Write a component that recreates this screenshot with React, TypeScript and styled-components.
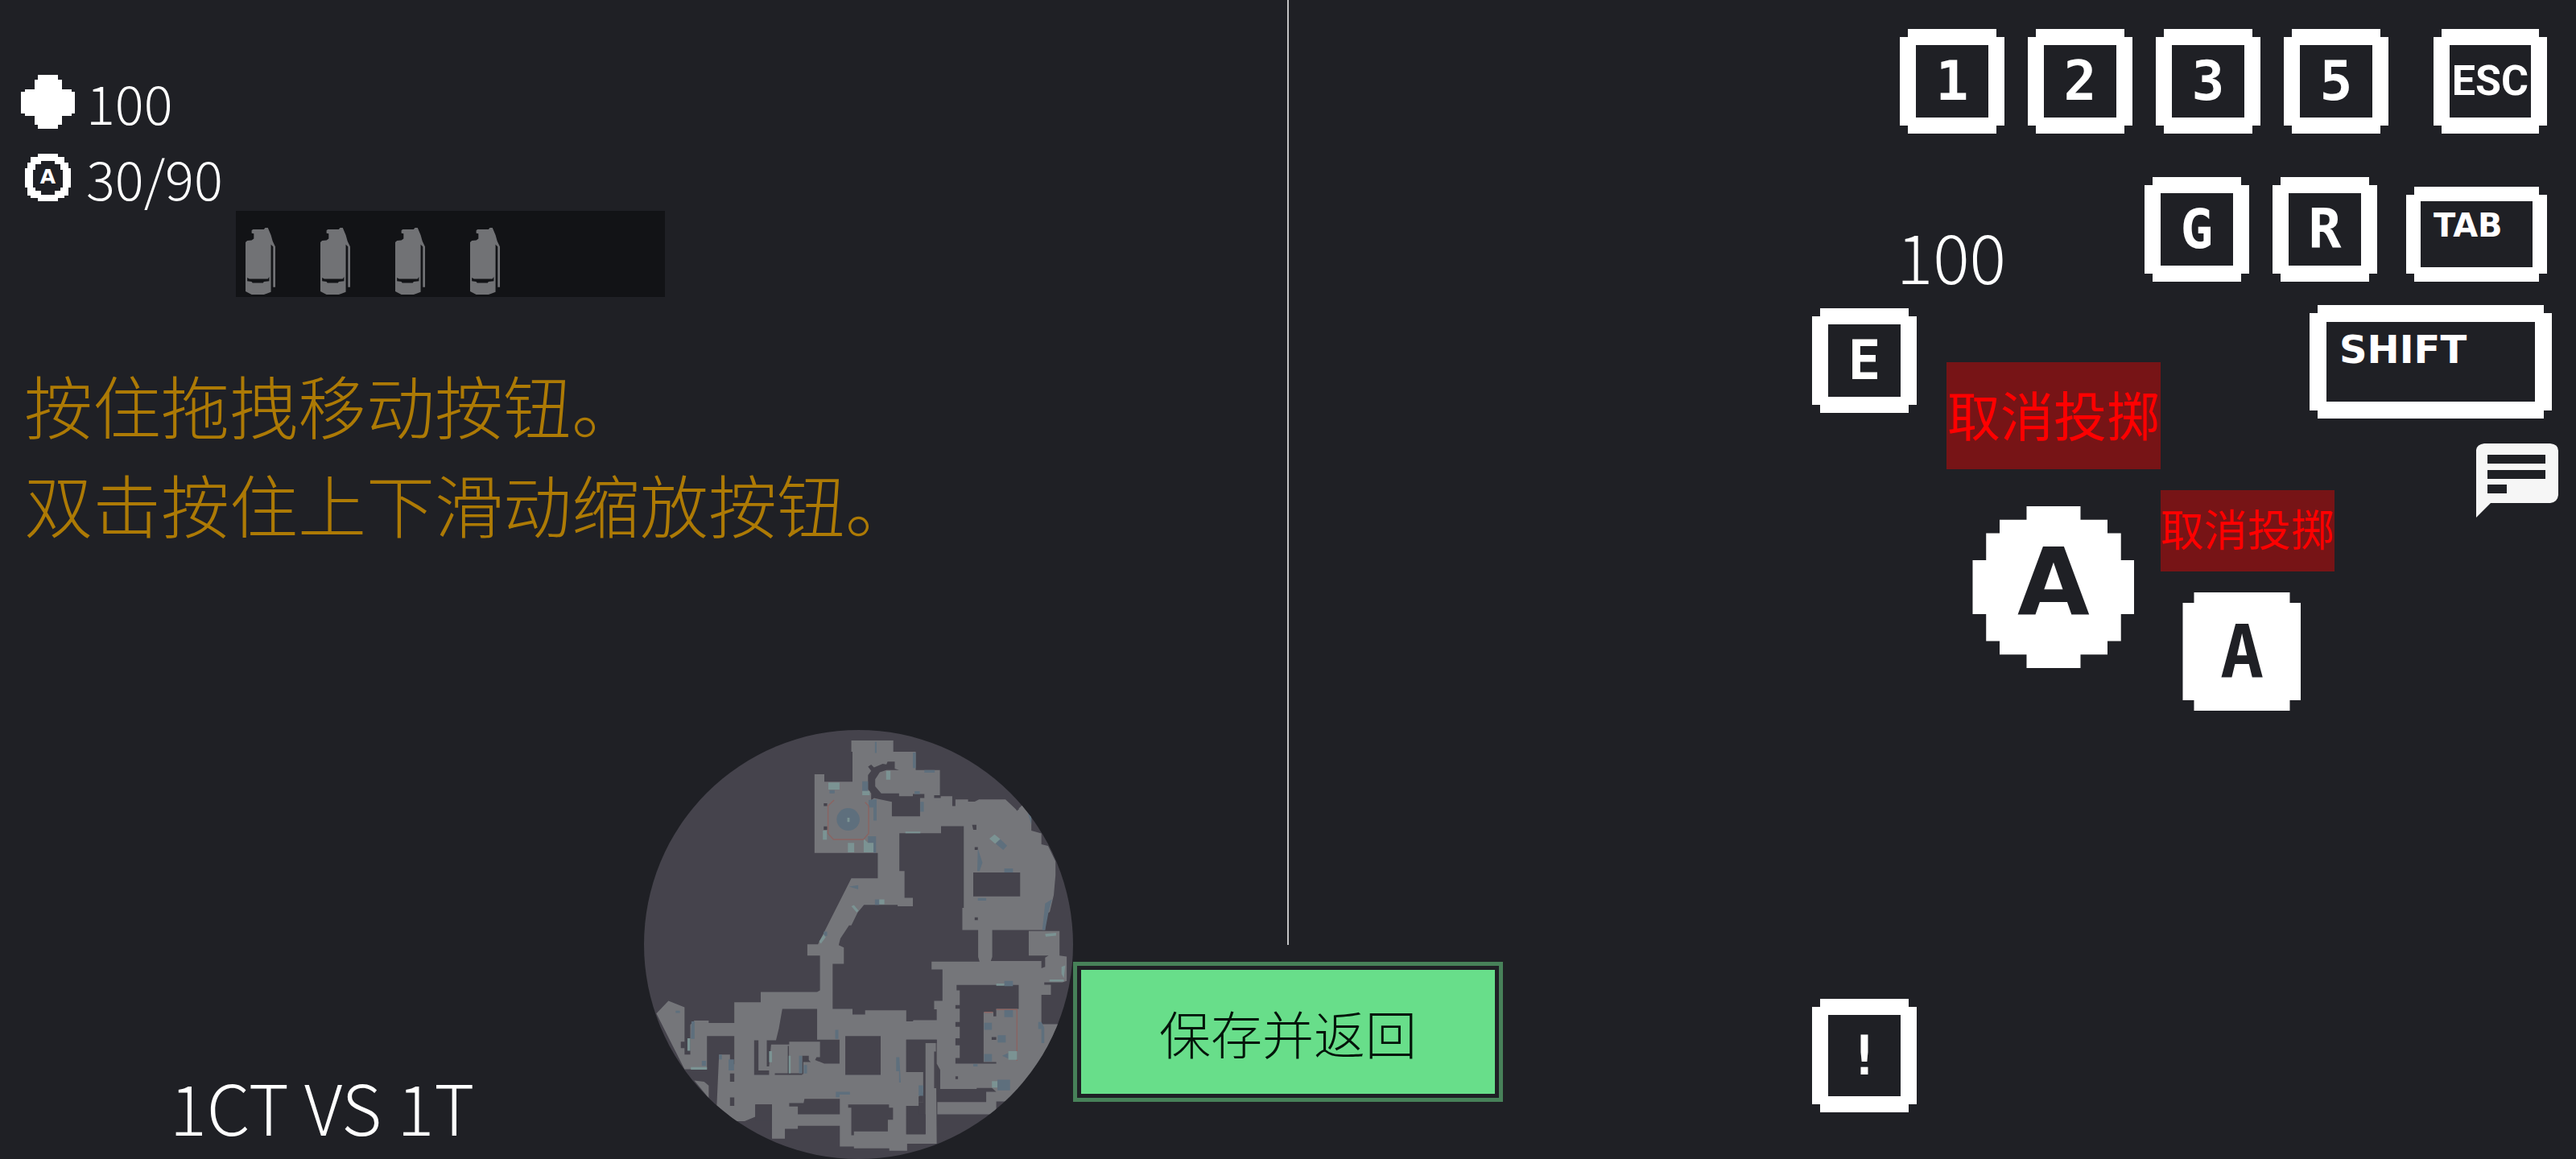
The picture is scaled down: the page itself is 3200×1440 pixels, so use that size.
import React from "react";
import styled, { createGlobalStyle } from "styled-components";

const ink = "#1f2025";
const white = "#ffffff";
const cjk = '"Noto Sans CJK SC", "Noto Sans", sans-serif';
const blocky = '"DejaVu Sans", "Liberation Sans", sans-serif';
const blockyMono = '"DejaVu Sans Mono", "Liberation Mono", monospace';
const narrow = 'Roboto, "Liberation Sans", sans-serif';

const GlobalStyle = createGlobalStyle`
  *, *::before, *::after { box-sizing: border-box; }
  body { margin: 0; background: ${ink}; color: ${white}; font-family: ${cjk}; font-weight: 300; }
  button { margin: 0; padding: 0; border: 0; background: none; color: inherit; font: inherit; cursor: pointer; }
  svg { display: block; }
`;

const Page = styled.main`
  display: grid;
  grid-template-columns: repeat(12, minmax(0, 1fr));
  grid-template-rows: 1fr auto;
  min-height: 100vh;
  overflow: hidden;
`;

/* ---------- left side ---------- */

const Status = styled.section`
  grid-column: 1 / 6;
  grid-row: 1;
  padding-top: 84px;
`;

const Stats = styled.div`
  display: grid;
  gap: 10px;
  padding-left: 26px;
`;

const Stat = styled.div`
  display: flex;
  align-items: center;
  gap: 14px;
  height: 84px;
  font-size: 67px;
  line-height: 84px;
`;

const StatIcon = styled.span`
  display: grid;
  place-items: center;
  width: 67px;
`;

const ArmorLetter = styled.span`
  grid-area: 1 / 1;
  font: 700 25px/28px ${blocky};
`;

const ArmorRing = styled.svg`
  grid-area: 1 / 1;
`;

const Slots = styled.div`
  display: flex;
  align-items: flex-end;
  gap: 56px;
  width: 40%;
  height: 107px;
  margin-left: 293px;
  padding: 0 12px 3px;
  background: #121316;
`;

const Tip = styled.p`
  margin: 71px 0 0;
  padding-left: 30px;
  color: #ad7a05;
  font-size: 85px;
  line-height: 123px;
  white-space: nowrap;
`;

const Score = styled.div`
  grid-column: 1 / 4;
  grid-row: 2;
  align-self: end;
  padding-bottom: 5px;
  font-size: 86px;
  line-height: 123px;
  text-align: center;
`;

const MiniMap = styled.div`
  grid-column: 4 / 6;
  grid-row: 2;
  aspect-ratio: 1;
  overflow: hidden;
  border-radius: 50%;
  background: #45434c;

  svg { width: 100%; height: 100%; }
`;

/* ---------- middle ---------- */

const Middle = styled.section`
  grid-column: 6 / 8;
  grid-row: 1 / 3;
  display: flex;
  flex-direction: column;
  align-items: center;
  padding-bottom: 71px;
`;

const Divider = styled.div`
  flex: 1;
  width: 2px;
  margin-bottom: 21px;
  background: #c3c3c5;
`;

const SaveButton = styled.button`
  width: 100%;
  height: 174px;
  padding: 5px;
  border: 5px solid #478159;
  font-size: 64px;
`;

const SaveFace = styled.span`
  display: grid;
  place-items: center;
  height: 100%;
  background: #68de8a;
  color: #04140a;
`;

/* ---------- right side ---------- */

const Controls = styled.section`
  grid-column: 8 / 13;
  grid-row: 1 / 3;
  display: flex;
  flex-direction: column;
  padding: 36px 22px 58px 0;
`;

const KeyRow = styled.div<{ $top: number }>`
  display: flex;
  justify-content: flex-end;
  align-items: flex-end;
  margin-top: ${(p) => p.$top}px;
  padding-right: 14px;
`;

const KeyGroup = styled.div<{ $after: number }>`
  display: flex;
  gap: 29px;
  margin-right: ${(p) => p.$after}px;
`;

const Key = styled.button<{ $w?: number; $h?: number; $edge?: number; $size?: number; $font?: string }>`
  flex: none;
  width: ${(p) => p.$w ?? 130}px;
  height: ${(p) => p.$h ?? 130}px;
  border: ${(p) => p.$edge ?? 20}px solid ${white};
  clip-path: polygon(
    10px 0, calc(100% - 10px) 0, calc(100% - 10px) 10px, 100% 10px,
    100% calc(100% - 10px), calc(100% - 10px) calc(100% - 10px), calc(100% - 10px) 100%, 10px 100%,
    10px calc(100% - 10px), 0 calc(100% - 10px), 0 10px, 10px 10px
  );
  display: flex;
  justify-content: center;
  align-items: center;
  font: 700 ${(p) => p.$size ?? 68}px/1 ${(p) => p.$font ?? blockyMono};
`;

const WideKey = styled(Key)`
  justify-content: flex-start;
  align-items: flex-start;
  padding: 10px 16px;
`;

const Money = styled.div`
  margin-right: auto;
  padding-left: 489px;
  font-size: 85px;
  line-height: 68px;
`;

const Pad = styled.div`
  flex: 1;
  display: grid;
  grid-template-columns: 167px 266px 185px 31px 278px;
  grid-template-rows: auto 1fr;
  justify-content: end;
  align-items: start;
  margin-top: 29px;
`;

const Cluster = styled.div<{ $cols: string; $top: number; $gap?: number; $align?: string }>`
  grid-column: ${(p) => p.$cols};
  grid-row: 1;
  display: flex;
  flex-direction: column;
  align-items: ${(p) => p.$align ?? "center"};
  gap: ${(p) => p.$gap ?? 0}px;
  padding-top: ${(p) => p.$top}px;
`;

const BottomKey = styled.div`
  grid-column: 1;
  grid-row: 2;
  align-self: end;
`;

const ShiftSlot = styled.div`
  padding-right: 8px;
`;

const Cancel = styled.button<{ $size: number; $h: number }>`
  width: 100%;
  height: ${(p) => p.$h}px;
  padding-bottom: 8px;
  background: #771416;
  color: #ff0000;
  font-size: ${(p) => p.$size}px;
  font-weight: 400;
  line-height: 1;
  text-align: center;
  white-space: nowrap;
`;

const RoundFire = styled.button`
  width: 201px;
  height: 201px;
  padding-bottom: 14px;
  background: ${white};
  color: ${ink};
  font: 700 116px/1 ${blocky};
  clip-path: polygon(
    33.33% 0, 66.67% 0, 66.67% 8.33%, 83.33% 8.33%, 83.33% 16.67%, 91.67% 16.67%, 91.67% 33.33%, 100% 33.33%,
    100% 66.67%, 91.67% 66.67%, 91.67% 83.33%, 83.33% 83.33%, 83.33% 91.67%, 66.67% 91.67%, 66.67% 100%, 33.33% 100%,
    33.33% 91.67%, 16.67% 91.67%, 16.67% 83.33%, 8.33% 83.33%, 8.33% 66.67%, 0 66.67%,
    0 33.33%, 8.33% 33.33%, 8.33% 16.67%, 16.67% 16.67%, 16.67% 8.33%, 33.33% 8.33%
  );
`;

const SquareFire = styled.button`
  width: 147px;
  height: 147px;
  margin-right: 14px;
  background: ${white};
  color: ${ink};
  font: 700 90px/1 ${blockyMono};
  clip-path: polygon(
    14px 0, calc(100% - 14px) 0, calc(100% - 14px) 13px, 100% 13px,
    100% calc(100% - 13px), calc(100% - 14px) calc(100% - 13px), calc(100% - 14px) 100%, 14px 100%,
    14px calc(100% - 13px), 0 calc(100% - 13px), 0 13px, 14px 13px
  );
`;

/* ---------- drawings ---------- */

const HealthIcon = () => (
  <svg width="67" height="67" viewBox="0 0 67 67" fill={white} aria-hidden="true">
    <path d="M21 0H46V6H51V18H63V21H67V48H63V51H51V62H46V67H21V62H17V51H5V48H0V21H5V18H17V6H21Z" />
  </svg>
);

const ArmorIcon = () => (
  <>
    <ArmorRing width="57" height="59" viewBox="0 0 57 59" fill={white} aria-hidden="true">
      <path
        fillRule="evenodd"
        d="M16 0H41V4H49V11H54V18H57V42H54V52H49V55H41V59H16V55H7V52H3V42H0V18H3V11H7V4H16Z
           M20 9V13H13V20H10V42H13V46H20V51H37V46H44V42H47V20H44V13H37V9Z"
      />
    </ArmorRing>
    <ArmorLetter>A</ArmorLetter>
  </>
);

const Grenade = () => (
  <svg width="37" height="83" viewBox="0 0 68 248" preserveAspectRatio="none" fill="#717275" aria-hidden="true">
    <path
      fillRule="evenodd"
      d="M14 10L17 6H42L45 0H51L58 27L62 50L68 70V220H63V70L58 62V238L51 243L42 248H14L0 236V54L4 48L14 46L19 40V22L14 20Z
         M4 185V198L14 200L16 205H40L42 200L54 198V182L51 190H9Z"
    />
  </svg>
);

const ChatIcon = () => (
  <svg width="102" height="92" viewBox="0 0 102 92" aria-hidden="true">
    <path
      fill="#f6f6f6"
      fillRule="evenodd"
      d="M10 0H92Q102 1 102 9V64Q101 73 92 74H18L0 92V8Q1 1 10 0Z M14 14V25H86V14Z M14 33V44H86V33Z M14 51V62H38V51Z"
    />
  </svg>
);

const MapDrawing = () => (
  <svg viewBox="55 45 1493 1522" preserveAspectRatio="none" role="img" aria-label="map">
    <g fill="#75767a">
      <path d="M776 82H922V122H1000V187H1084V276H1064V286H1087V280H1127V315H1138V291H1182V299H1205L1220 291H1312L1352 330L1370 312L1402 352V402L1437 412V450L1460 456L1486 510V560L1480 630L1466 690L1450 700V754H1162V676H1167V386H1088V411H943V545H961V640H990V670H937V665H820L798 692L776 738H768L738 784L732 808L750 816V874H711V1034H780V1054H824V1039H967V1078H990L992 1074H1073V1035H1064V1005H1093V894H1055V866H1222L1217 850V754H1266V850L1261 864H1437V890L1450 885V852L1462 845H1393V758H1500V845L1525 848V935L1510 940H1447V948H1470V984H1437V1088H1505L1450 1250L1320 1362H1280V1390L1268 1408H1075V1364H1245V1328H1280L1265 1314H1212V1318H1085V1250L1073 1228V1143H967V1258H1026V1364H1010V1378H967V1478H1034V1155H1070L1073 1512H970V1537H908V1528H785V1522H736V1448H590V1459H545V1494H500V1373H442V1416L405 1432H375L308 1376L316 1196H354V1230H369V1130H274V1248H196L98 1050L140 1005L196 1028V1196H216V1090L230 1075H280V1084H369V1010H461V974H657L667 968V845H623V805H660L776 571H868V481H648V202H682V228H780V122H776Z" />
      <path d="M230 1288L264 1292L280 1306V1350Z" />
    </g>
    <g fill="#45434c">
      <path d="M834 175L845 168L855 178L885 165L898 167L902 157H927V182L942 187H898L875 195L859 220V245L880 270H942V280H990V272H1030V286H1015V351H917V300L870 290L855 286L845 294V270L834 255V205L845 190Z" />
      <path d="M1200 550H1363V635H1200ZM1142 949H1358V1034H1280V1060H1270V1045H1236V1222H1280V1228H1138V1208H1153V1163H1138V1138H1153V1097H1138V1080H1153V1033H1138V1020H1153V968H1142Z" />
      <path d="M536 1034H657V1143H735V1228H682L650 1215L655 1205H667V1150H560V1160H497L490 1238H482V1145H514L524 1103ZM438 1145H453V1252H490V1268H438ZM755 1130H878V1268H755ZM555 1165H559V1262H605V1268H510V1262H555ZM605 1200H628V1215L635 1222H609V1265H605Z" />
      <path d="M442 1373H500V1430H442ZM613 1353H736V1408H590V1380H560V1368H610ZM765 1373H907V1384H921V1427H903V1468H785V1482H776V1384H765ZM967 1143H1073V1155H1030V1258H967ZM1010 1345L1026 1330V1364H1010ZM967 1378H1010V1408H1034V1478H967ZM1064 1185H1071V1315H1064Z" />
      <path d="M354 1263H369V1292H354ZM354 1348H369V1378H354ZM183 1150H197V1173H183ZM1196 381H1211V399H1200ZM1205 460H1216V470H1205ZM1205 709H1216V719H1205ZM1138 1273H1147V1283H1138ZM1264 1134H1280V1144H1264ZM680 305H692V315H680ZM680 387H692V399H680ZM1345 320L1360 325L1352 332Z" />
    </g>
    <g fill="#5e6f7d">
      <circle cx="765" cy="362" r="40" />
      <path d="M814 227H834V261H814ZM836 293L864 290V366H853V320H836ZM834 422H862V480H853V446H834ZM700 258H718V270H700ZM1016 300H1028V335H1016ZM990 125H1000V180H990ZM1030 187H1066V196H1030ZM996 262H1014V272H996ZM1278 448L1292 430L1318 455L1304 470ZM1216 465L1232 515L1222 545H1214ZM1308 536H1338V550H1308ZM1216 641H1245V650H1216ZM1450 660L1474 645L1462 690L1450 754H1440ZM1390 340L1402 352V380ZM768 600L800 595V610ZM858 646H873V665H858ZM680 760H692V775H680Z" />
      <path d="M1308 935H1338V953H1308ZM1308 1036H1338V1063H1308ZM1238 1083H1265V1108H1238ZM1285 1127H1313V1153H1285ZM1238 1194H1265V1220H1238ZM1300 1200L1322 1190V1210ZM1284 1285H1328V1323H1284ZM1426 1080H1437L1447 1100V1155H1437V1105H1426ZM720 1108H731V1140H720ZM932 1205H943L948 1295H942V1255H932ZM722 1328H771V1338H735V1347H722ZM349 1213H368V1252H349ZM220 1078H231V1140H218ZM256 1218H271V1236H256ZM594 1200H605V1262H594ZM611 1233H622V1263H611ZM1010 1305H1026V1342H1010ZM316 1196H326V1213H316ZM165 1040H180V1048H165ZM858 87H864V126H858ZM1200 1229H1215V1238H1200Z" />
    </g>
    <g fill="#7b9393">
      <path d="M696 231H735V256H696ZM814 261H840V276H814ZM897 190H912V221H897ZM677 402H691V434H677ZM764 445H786V479H764ZM819 430L834 445H853V479H819ZM762 356H770V371H762ZM1256 430L1274 415L1294 432L1276 448ZM873 646H891V663H873ZM776 670L785 666L801 685L795 692ZM664 795L680 770L687 780L670 803ZM964 405H1016V411H964Z" />
      <path d="M1322 1184H1352V1214H1322ZM1265 1290H1284V1313H1265ZM1450 768L1488 764V774L1452 778ZM1507 885L1520 880L1515 925L1507 910ZM1465 930H1515V937H1465ZM1280 944H1308V952H1280ZM206 1138H216V1182H206ZM218 1240H274V1249H218ZM490 1184H500V1223H490ZM558 1200H565V1262H558Z" />
    </g>
    <g fill="none" stroke="#8a6462" strokeWidth="4">
      <path d="M716 293L695 314V412L714 433H818L836 412V314L824 301M1280 1036H1352V1184M1352 1214V1218M1238 1046H1268" />
    </g>
  </svg>
);

const slots = [1, 2, 3, 4];
const weaponKeys = ["1", "2", "3", "5"];
const actionKeys = ["G", "R"];

export default function App() {
  return (
    <>
      <GlobalStyle />
      <Page>
        <Status>
          <Stats>
            <Stat>
              <StatIcon><HealthIcon /></StatIcon>
              <span>100</span>
            </Stat>
            <Stat>
              <StatIcon><ArmorIcon /></StatIcon>
              <span>30/90</span>
            </Stat>
          </Stats>
          <Slots>
            {slots.map((slot) => <Grenade key={slot} />)}
          </Slots>
          <Tip>
            按住拖拽移动按钮。<br />
            双击按住上下滑动缩放按钮。
          </Tip>
        </Status>

        <Score>1CT VS 1T</Score>
        <MiniMap><MapDrawing /></MiniMap>

        <Middle>
          <Divider />
          <SaveButton type="button"><SaveFace>保存并返回</SaveFace></SaveButton>
        </Middle>

        <Controls>
          <KeyRow $top={0}>
            <KeyGroup $after={56}>
              {weaponKeys.map((label) => <Key key={label} type="button">{label}</Key>)}
            </KeyGroup>
            <Key type="button" $w={141} $size={52} $font={narrow}>ESC</Key>
          </KeyRow>

          <KeyRow $top={54}>
            <Money>100</Money>
            <KeyGroup $after={36}>
              {actionKeys.map((label) => <Key key={label} type="button">{label}</Key>)}
            </KeyGroup>
            <WideKey type="button" $w={175} $h={118} $edge={18} $size={40} $font={blocky}>TAB</WideKey>
          </KeyRow>

          <Pad>
            <Cluster $cols="1" $top={4} $align="flex-start">
              <Key type="button">E</Key>
            </Cluster>
            <Cluster $cols="2" $top={71} $gap={46}>
              <Cancel type="button" $size={66} $h={133}>取消投掷</Cancel>
              <RoundFire type="button">A</RoundFire>
            </Cluster>
            <Cluster $cols="3 / 5" $top={230} $gap={26}>
              <Cancel type="button" $size={54} $h={101}>取消投掷</Cancel>
              <SquareFire type="button">A</SquareFire>
            </Cluster>
            <Cluster $cols="4 / 6" $top={0} $gap={31} $align="flex-end">
              <ShiftSlot>
                <WideKey type="button" $w={301} $h={141} $edge={21} $size={48} $font={blocky}>SHIFT</WideKey>
              </ShiftSlot>
              <button type="button" aria-label="chat"><ChatIcon /></button>
            </Cluster>
            <BottomKey>
              <Key type="button" $h={141}>!</Key>
            </BottomKey>
          </Pad>
        </Controls>
      </Page>
    </>
  );
}
